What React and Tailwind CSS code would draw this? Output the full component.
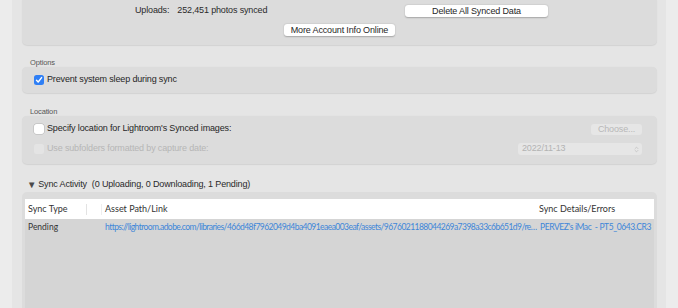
import { ChevronsUpDown } from 'lucide-react';

const sys = { fontFamily: '"Liberation Sans", Arial, sans-serif' };
const tbl = { fontFamily: 'Lato, "Open Sans", sans-serif' };

function MacButton({ children, className = '', disabled = false }) {
  return (
    <div
      className={`flex items-center justify-center rounded-[3px] text-[9px] leading-none ${
        disabled
          ? 'bg-[#e6e6e6] text-[#b8b8b8]'
          : 'bg-white text-[#262626] shadow-[0_0.5px_1.5px_rgba(0,0,0,0.25)]'
      } ${className}`}
    >
      {children}
    </div>
  );
}

function Checkbox({ checked = false, disabled = false }) {
  if (checked) {
    return (
      <div className="w-[10px] h-[10px] rounded-[2.5px] bg-[#2f7ff5] flex items-center justify-center shrink-0">
        <svg width="8" height="8" viewBox="0 0 8 8">
          <path d="M1.5 4.2 L3.2 6 L6.6 1.6" fill="none" stroke="white" strokeWidth="1.4" strokeLinecap="round" strokeLinejoin="round" />
        </svg>
      </div>
    );
  }
  return (
    <div
      className={`w-[10px] h-[10px] rounded-[2.5px] shrink-0 ${
        disabled ? 'bg-[#e4e4e4]' : 'bg-white shadow-[0_0_0_0.5px_rgba(0,0,0,0.18)]'
      }`}
    />
  );
}

export default function App() {
  return (
    <div className="w-[678px] h-[308px] overflow-hidden flex bg-[#ececec] tracking-[-0.15px]" style={sys}>
      <div className="w-[12px] bg-[#ececec]" />
      <div className="flex-1 bg-[#e5e5e5] pl-[10px] pr-[9px] flex flex-col">
        {/* Account panel */}
        <div className="h-[45px] rounded-b-[5px] bg-[#dcdcdc] shrink-0 pt-[5px] flex flex-col shadow-[0_0.5px_1px_rgba(0,0,0,0.08)]">
          <div className="flex items-center h-[12px]">
            <span className="ml-[113px] text-[9px] text-[#2a2a2a]">Uploads:</span>
            <span className="ml-[8px] text-[9px] text-[#2a2a2a]">252,451 photos synced</span>
            <MacButton className="ml-auto mr-[109px] w-[143px] h-[12px]">Delete All Synced Data</MacButton>
          </div>
          <div className="mt-[7px] flex">
            <MacButton className="ml-[262px] w-[111px] h-[12px]">More Account Info Online</MacButton>
          </div>
        </div>

        {/* Options */}
        <div className="mt-[13px] pl-[8px] text-[7.5px] text-[#555] leading-[9px]">Options</div>
        <div className="h-[26px] rounded-[5px] bg-[#dcdcdc] flex items-center pl-[12px] gap-[3px] shrink-0 shadow-[0_0.5px_1px_rgba(0,0,0,0.08)]">
          <Checkbox checked />
          <span className="text-[9px] text-[#262626]">Prevent system sleep during sync</span>
        </div>

        {/* Location */}
        <div className="mt-[14px] pl-[8px] text-[7.5px] text-[#555] leading-[9px]">Location</div>
        <div className="h-[48px] rounded-[5px] bg-[#dcdcdc] flex flex-col pl-[12px] pr-[15px] shrink-0 shadow-[0_0.5px_1px_rgba(0,0,0,0.08)]">
          <div className="mt-[7px] flex items-center h-[12px] gap-[3px]">
            <Checkbox />
            <span className="text-[9px] text-[#262626]">Specify location for Lightroom's Synced images:</span>
            <MacButton disabled className="ml-auto w-[51px] h-[11px]">Choose...</MacButton>
          </div>
          <div className="mt-[8px] flex items-center h-[12px] gap-[3px]">
            <Checkbox disabled />
            <span className="text-[9px] text-[#b6b6b6]">Use subfolders formatted by capture date:</span>
            <div className="ml-auto w-[124px] h-[12px] rounded-[3px] bg-[#e6e6e6] flex items-center pl-[4px] pr-[2px] text-[9px] text-[#b3b3b3]">
              <span>2022/11-13</span>
              <ChevronsUpDown className="ml-auto w-[7px] h-[7px]" strokeWidth={2} color="#b3b3b3" />
            </div>
          </div>
        </div>

        {/* Sync activity */}
        <div className="mt-[15px] pl-[5px] flex items-center h-[11px] text-[9px] text-[#2a2a2a]">
          <span className="text-[9.5px] text-[#4a4a4a] mr-[2px] leading-none">▼</span>
          <span>Sync Activity</span>
          <span className="ml-[5px]">(0 Uploading, 0 Downloading, 1 Pending)</span>
        </div>
        <div className="mt-[2px] flex-1 rounded-t-[5px] bg-[#dcdcdc] px-[3px] pt-[7px]">
          <div className="h-full bg-[#d5d5d5] tracking-normal" style={tbl}>
            <div className="h-[20px] bg-white flex items-center text-[9px] text-[#333]">
              <span className="w-[61px] pl-[3px] shrink-0">Sync Type</span>
              <div className="w-px h-[11px] bg-[#e3e3e3]" />
              <div className="w-[14px]" />
              <div className="w-px h-[11px] bg-[#eeeeee]" />
              <span className="w-[436px] pl-[3px] shrink-0">Asset Path/Link</span>
              <span className="pl-[1px]">Sync Details/Errors</span>
            </div>
            <div className="h-[14px] flex items-center mt-[1px]">
              <span className="w-[77px] pl-[3px] text-[#333] shrink-0 text-[8.5px]">Pending</span>
              <span className="w-[436px] pl-[3px] text-[8.5px] text-[#3d86d9] tracking-[-0.55px] truncate shrink-0">
                https://lightroom.adobe.com/libraries/466d48f7962049d4ba4091eaea003eaf/assets/9676021188044269a7398a33c6b651d9/revisions/7b5e2c1d
              </span>
              <span className="min-w-0 pl-[2px] text-[8.5px] text-[#3d86d9] tracking-[-0.4px] whitespace-nowrap">PERVEZ's iMac&nbsp; - PT5_0643.CR3</span>
            </div>
          </div>
        </div>
      </div>
      <div className="w-[12px] bg-[#ececec]" />
    </div>
  );
}
